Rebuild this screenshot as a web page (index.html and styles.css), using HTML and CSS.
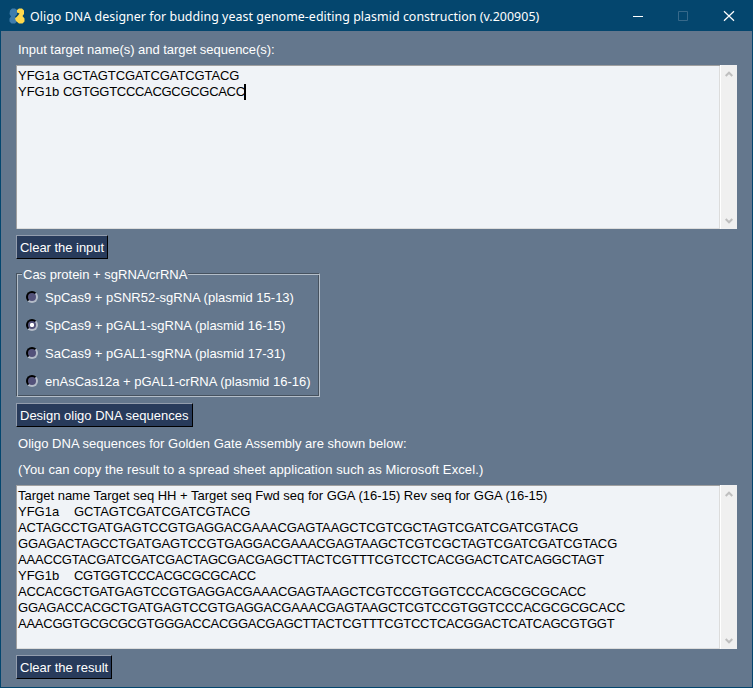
FILE: index.html
```html
<!DOCTYPE html>
<html lang="en">
<head>
<meta charset="utf-8">
<title>Oligo DNA designer</title>
<link rel="stylesheet" href="styles.css">
</head>
<body>
<div class="window">
  <header class="titlebar">
    <svg class="logo" width="16" height="16" viewBox="0 0 16 16">
      <path fill="#3f7cac" d="M1 2.500 3 .5H6L8 2V6.500L6 8.500 7.500 10.500V14L6 15.500H2.500L.5 13.500V10.500L2 8.500.5 6Z"/>
      <path fill="#ffd94c" d="M8 2 10 .5H13L15 2.500V6L13.500 8 15.500 10.500V13.500L13.500 15.500H10L7 13 6 10.500 9 7.500 10.500 5.500 8 4.500Z"/>
    </svg>
    <h1 class="caption">Oligo DNA designer for budding yeast genome-editing plasmid construction (v.200905)</h1>
    <svg class="controls" width="138" height="30" viewBox="0 0 138 30" fill="none">
      <path stroke="#fff" d="M18 15.500H28"/>
      <path stroke="#37698a" d="M63.500 10.500H72.500V19.500H63.500Z"/>
      <path stroke="#fff" stroke-width="1.200" d="M109 10.200 119 19.800M119 10.200 109 19.800"/>
    </svg>
  </header>
  <main class="content">
    <p class="label first">Input target name(s) and target sequence(s):</p>
    <div class="editor">
      <div class="lines">
        <div><span class="key">YFG1a</span><span class="a1">GCTAGTCGATCGATCGTACG</span></div>
        <div><span class="key">YFG1b</span><span class="a2">CGTGGTCCCACGCGCGCACC</span><i class="caret"></i></div>
      </div>
      <div class="scroll"><svg width="8" height="6" viewBox="0 0 8 6"><path d="M.7 5 4 1.700 7.300 5"/></svg><svg width="8" height="6" viewBox="0 0 8 6"><path d="M.7 1 4 4.300 7.300 1"/></svg></div>
    </div>
    <button class="btn b1">Clear the input</button>
    <fieldset class="frame">
      <legend>Cas protein + sgRNA/crRNA</legend>
      <div class="option"><i class="radio"></i>SpCas9 + pSNR52-sgRNA (plasmid 15-13)</div>
      <div class="option"><i class="radio on"></i>SpCas9 + pGAL1-sgRNA (plasmid 16-15)</div>
      <div class="option"><i class="radio"></i>SaCas9 + pGAL1-sgRNA (plasmid 17-31)</div>
      <div class="option"><i class="radio"></i>enAsCas12a + pGAL1-crRNA (plasmid 16-16)</div>
    </fieldset>
    <button class="btn b2">Design oligo DNA sequences</button>
    <p class="label second">Oligo DNA sequences for Golden Gate Assembly are shown below:</p>
    <p class="label third">(You can copy the result to a spread sheet application such as Microsoft Excel.)</p>
    <div class="editor">
      <div class="lines">
        <div class="r1">Target name Target seq HH + Target seq Fwd seq for GGA (16-15) Rev seq for GGA (16-15)</div>
        <div><span class="name">YFG1a</span><span class="r2">GCTAGTCGATCGATCGTACG</span></div>
        <div class="r3">ACTAGCCTGATGAGTCCGTGAGGACGAAACGAGTAAGCTCGTCGCTAGTCGATCGATCGTACG</div>
        <div class="r4">GGAGACTAGCCTGATGAGTCCGTGAGGACGAAACGAGTAAGCTCGTCGCTAGTCGATCGATCGTACG</div>
        <div class="r5">AAACCGTACGATCGATCGACTAGCGACGAGCTTACTCGTTTCGTCCTCACGGACTCATCAGGCTAGT</div>
        <div><span class="name">YFG1b</span><span class="r6">CGTGGTCCCACGCGCGCACC</span></div>
        <div class="r7">ACCACGCTGATGAGTCCGTGAGGACGAAACGAGTAAGCTCGTCCGTGGTCCCACGCGCGCACC</div>
        <div class="r8">GGAGACCACGCTGATGAGTCCGTGAGGACGAAACGAGTAAGCTCGTCCGTGGTCCCACGCGCGCACC</div>
        <div class="r9">AAACGGTGCGCGCGTGGGACCACGGACGAGCTTACTCGTTTCGTCCTCACGGACTCATCAGCGTGGT</div>
      </div>
      <div class="scroll"><svg width="8" height="6" viewBox="0 0 8 6"><path d="M.7 5 4 1.700 7.300 5"/></svg><svg width="8" height="6" viewBox="0 0 8 6"><path d="M.7 1 4 4.300 7.300 1"/></svg></div>
    </div>
    <button class="btn b3">Clear the result</button>
  </main>
</div>
</body>
</html>
```

FILE: styles.css
```css
* { box-sizing: border-box; }
body { margin: 0; font: 13px/16px "Liberation Sans", Arial, sans-serif; }
.window { width: 753px; height: 688px; display: flex; flex-direction: column; background: #64778d; border: solid #04466e; border-width: 0 1px 1px; }

.titlebar { height: 31px; flex: none; display: flex; align-items: center; background: #04466e; padding-left: 9px; margin: 0 -1px; }
.caption { flex: 1; margin: 0 0 0 5px; padding-top: 2px; font: 12.4px/18px "Noto Sans", "Open Sans", sans-serif; letter-spacing: .045px; color: #fff; white-space: nowrap; }
.controls { flex: none; }

.content { display: flex; flex-direction: column; align-items: flex-start; padding: 10px 15px 0; color: #fff; }
.label { margin: 0; height: 26px; padding: 0 0 0 2px; white-space: nowrap; }
.first { height: 24px; padding-top: 1px; letter-spacing: -.03px; }
.second { margin-top: 9px; letter-spacing: .02px; }
.third { height: 23px; letter-spacing: .105px; }

.editor { width: 721px; height: 164px; flex: none; display: flex; background: #f0f3f7; border: solid #a0a0a0; border-width: 1px 0 0 1px; }
.lines { flex: 1; color: #000; padding: 2px 0 0 1px; border: solid #dcdcdc; border-width: 0 1px 1px 0; white-space: nowrap; }
.lines > div { height: 16px; display: flex; }
.key { width: 45px; }
.name { width: 56px; }
.caret { width: 2px; height: 16px; margin-left: -1px; background: #000; }
.scroll { width: 17px; margin-top: -1px; background: #f0f0f0; border-left: 1px solid #fff; display: flex; flex-direction: column; justify-content: space-between; align-items: center; padding: 6px 0 5px; }
.scroll path { fill: none; stroke: #bfbfbf; stroke-width: 2; }

/* Tracking per sequence line */
.a1, .r2 { letter-spacing: -.09px; }
.a2, .r6 { letter-spacing: -.3px; }
.r1 { letter-spacing: -.01px; }
.r3 { letter-spacing: -.127px; }
.r4 { letter-spacing: -.12px; }
.r5 { letter-spacing: -.187px; }
.r7 { letter-spacing: -.193px; }
.r8 { letter-spacing: -.18px; }
.r9 { letter-spacing: -.255px; }

.btn { height: 24px; margin: 6px 0 0; padding: 2px 0 0 3px; font: inherit; color: #fff; text-align: left; white-space: nowrap; background: #283b5b; border: 1px solid; border-color: #939dad #000 #000 #939dad; border-radius: 0; }
.b1 { width: 92px; letter-spacing: -.03px; }
.b2 { width: 177px; }
.b3 { width: 96px; }

.frame { width: 304px; height: 131px; margin: 7px 0 0; padding: 3px 0 0; min-width: 0; border: 1px solid; border-color: #46525f #b4bec9 #b4bec9 #46525f; box-shadow: inset 1px 1px #b4bec9, inset -1px -1px #46525f; }
legend { margin-left: 5px; padding: 1px 1px 0; height: 15px; background: #64778d; }
.option { height: 28px; display: flex; align-items: center; white-space: nowrap; padding-left: 9px; }
.radio { width: 12px; height: 12px; margin: 0 7px 2px 0; border: 2px solid; border-color: #000 #b4bcc8 #b4bcc8 #000; border-radius: 50%; background: #53527a; }
.radio.on { background: radial-gradient(circle, #fff 1.800px, #53527a 2.500px); }
```
